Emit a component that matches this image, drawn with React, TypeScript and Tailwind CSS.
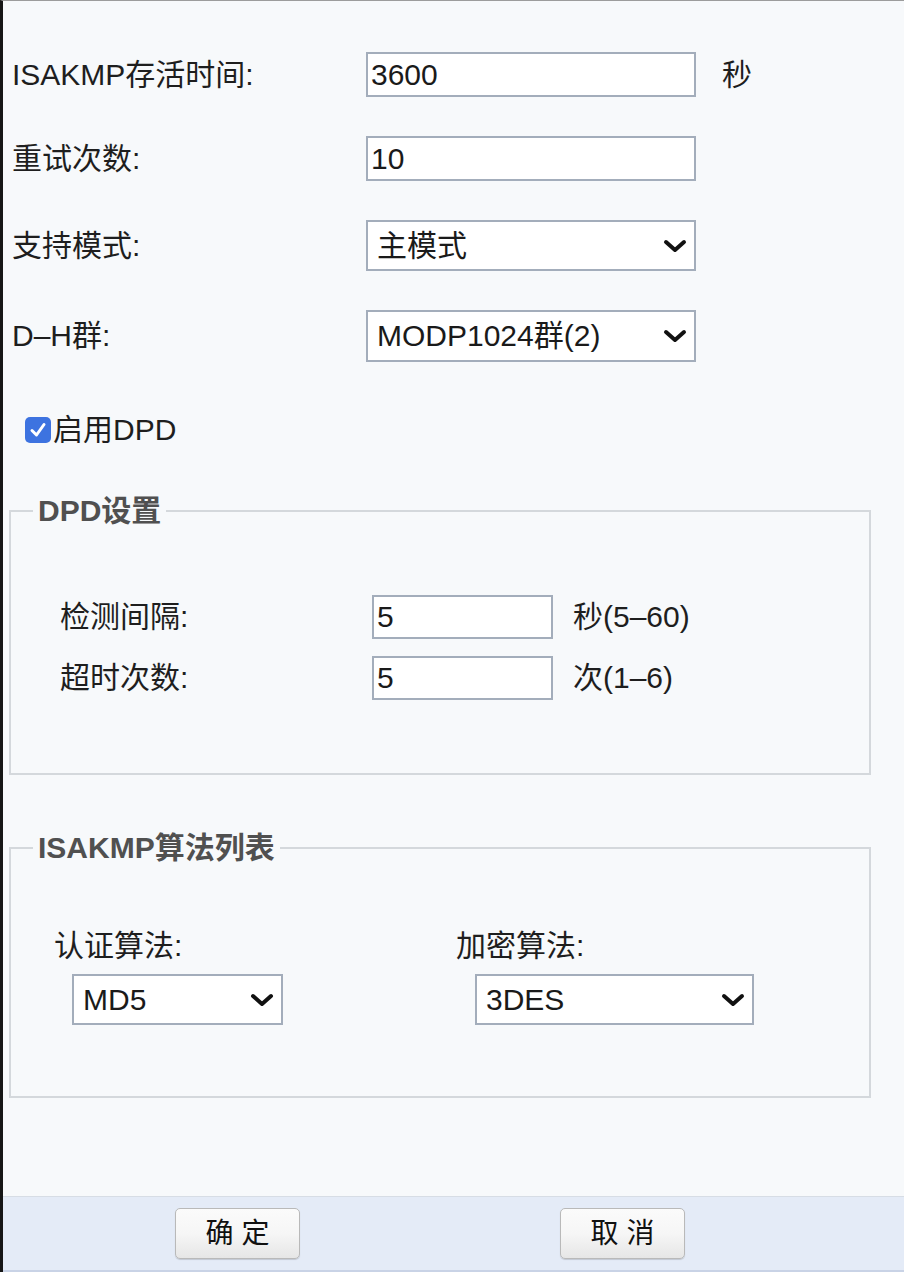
import React, { useState } from 'react';

const font = { fontFamily: '"Liberation Sans", "Noto Sans CJK SC", sans-serif' };

const Chevron: React.FC = () => (
  <svg width="26" height="16" viewBox="0 0 26 16" className="shrink-0">
    <polyline points="4,4 13,12 22,4" fill="none" stroke="#111" strokeWidth="4" strokeLinecap="round" strokeLinejoin="round" />
  </svg>
);

const TextBox: React.FC<{ value: string; className: string }> = ({ value, className }) => {
  const [v, setV] = useState(value);
  return (
    <input
      value={v}
      onChange={(e) => setV(e.target.value)}
      className={`bg-white border-2 border-[#a3adbb] pl-[3px] text-[30px] text-[#1a1a1a] outline-none ${className}`}
      style={font}
    />
  );
};

const SelectBox: React.FC<{ value: string; className: string }> = ({ value, className }) => (
  <div className={`bg-white border-2 border-[#a3adbb] flex items-center justify-between pl-[9px] pr-[6px] text-[30px] text-[#1a1a1a] ${className}`}>
    <span>{value}</span>
    <Chevron />
  </div>
);

const Row: React.FC<{ label: string; children: React.ReactNode }> = ({ label, children }) => (
  <div className="flex items-center">
    <div className="w-[354px] shrink-0">{label}</div>
    {children}
  </div>
);

const App: React.FC = () => {
  const [dpd, setDpd] = useState(true);

  return (
    <div className="w-[904px] h-[1272px] flex flex-col bg-[#f7f9fb] border-l-[3px] border-t border-l-[#161616] border-t-[#9c9c9c] text-[30px] text-[#1e1e1e] leading-[36px]" style={font}>
      <div className="flex-1 pl-[9px] pt-[51px]">
        <div className="flex flex-col gap-[39px]">
          <Row label="ISAKMP存活时间:">
            <TextBox value="3600" className="w-[330px] h-[45px]" />
            <span className="ml-[26px]">秒</span>
          </Row>
          <Row label="重试次数:">
            <TextBox value="10" className="w-[330px] h-[45px]" />
          </Row>
          <Row label="支持模式:">
            <SelectBox value="主模式" className="w-[330px] h-[51px]" />
          </Row>
          <Row label="D–H群:">
            <SelectBox value="MODP1024群(2)" className="w-[330px] h-[52px]" />
          </Row>
        </div>

        <label className="flex items-center mt-[50px] ml-[13px] cursor-pointer select-none">
          <span
            onClick={() => setDpd(!dpd)}
            className={`w-[26px] h-[26px] rounded-[5px] flex items-center justify-center ${dpd ? 'bg-[#3d73e0]' : 'bg-white border-2 border-[#999]'}`}
          >
            {dpd && (
              <svg width="20" height="20" viewBox="0 0 20 20">
                <polyline points="4,10.5 8.5,15 16,4.5" fill="none" stroke="#fff" strokeWidth="3" strokeLinecap="round" strokeLinejoin="round" />
              </svg>
            )}
          </span>
          <span className="ml-[2px]">启用DPD</span>
        </label>

        <fieldset className="w-[862px] -ml-[3px] mt-[45px] border-2 border-[#d4d8dc] pb-[73px]">
          <legend className="ml-[22px] px-[5px] font-bold text-[#505050]">DPD设置</legend>
          <div className="flex flex-col gap-[17px] pl-[49px] pt-[66px]">
            <div className="flex items-center">
              <div className="w-[312px] shrink-0">检测间隔:</div>
              <TextBox value="5" className="w-[181px] h-[44px]" />
              <span className="ml-[20px]">秒(5–60)</span>
            </div>
            <div className="flex items-center">
              <div className="w-[312px] shrink-0">超时次数:</div>
              <TextBox value="5" className="w-[181px] h-[44px]" />
              <span className="ml-[20px]">次(1–6)</span>
            </div>
          </div>
        </fieldset>

        <fieldset className="w-[862px] -ml-[3px] mt-[55px] border-2 border-[#d4d8dc] pb-[71px]">
          <legend className="ml-[22px] px-[5px] font-bold text-[#505050]">ISAKMP算法列表</legend>
          <div className="flex pl-[43px] pt-[62px]">
            <div className="w-[402px] shrink-0">
              <div>认证算法:</div>
              <SelectBox value="MD5" className="ml-[18px] mt-[10px] w-[211px] h-[51px]" />
            </div>
            <div>
              <div>加密算法:</div>
              <SelectBox value="3DES" className="ml-[19px] mt-[10px] w-[279px] h-[51px]" />
            </div>
          </div>
        </fieldset>
      </div>

      <div className="h-[76px] shrink-0 bg-[#e4ebf7] border-t border-[#d7dde5] border-b-2 border-b-[#c9d3e6] flex items-center">
        <button className="ml-[172px] w-[125px] h-[51px] rounded-[5px] border border-[#b9b9b9] bg-gradient-to-b from-[#fbfbfb] via-[#f6f6f6] to-[#e6e6e6] text-[28px] text-[#111] shadow-[0_1px_1px_rgba(0,0,0,0.15)]">
          确 定
        </button>
        <button className="ml-[260px] w-[125px] h-[51px] rounded-[5px] border border-[#b9b9b9] bg-gradient-to-b from-[#fbfbfb] via-[#f6f6f6] to-[#e6e6e6] text-[28px] text-[#111] shadow-[0_1px_1px_rgba(0,0,0,0.15)]">
          取 消
        </button>
      </div>
    </div>
  );
};

export default App;
